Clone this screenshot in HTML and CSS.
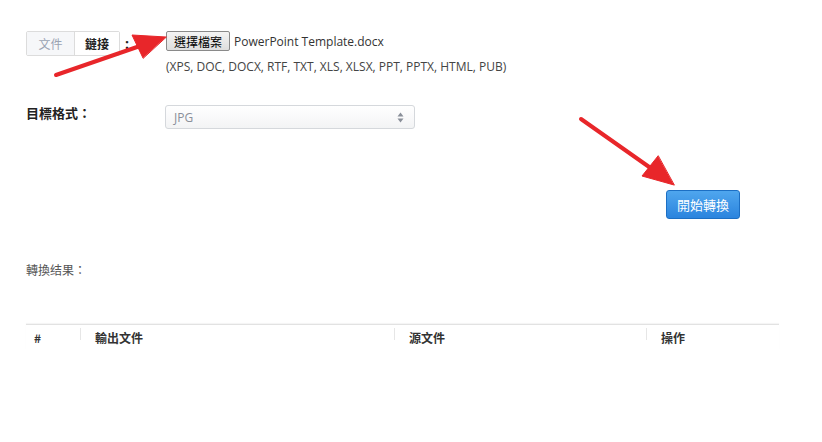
FILE: index.html
```html
<!DOCTYPE html>
<html lang="zh-Hant">
<head>
<meta charset="utf-8">
<title>文件轉換</title>
<link rel="stylesheet" href="styles.css">
</head>
<body>
<div class="page">
  <form class="convert-form">
    <div class="row source-row">
      <div class="source-label">
        <div class="tabs">
          <span class="tab tab-off">文件</span>
          <span class="tab tab-on">鏈接</span>
        </div>
        <span class="colon">:</span>
      </div>
      <div class="source-field">
        <div class="file-line">
          <button type="button" class="file-btn">選擇檔案</button>
          <span class="file-name">PowerPoint Template.docx</span>
        </div>
        <div class="formats">(XPS, DOC, DOCX, RTF, TXT, XLS, XLSX, PPT, PPTX, HTML, PUB)</div>
      </div>
    </div>

    <div class="row target-row">
      <label class="field-label">目標格式：</label>
      <div class="select">
        <span>JPG</span>
        <svg class="caret" width="7" height="11" viewBox="0 0 7 11"><path d="M3.5 0.5 L6.5 4.5 H0.5 Z M3.5 10.5 L6.5 6.5 H0.5 Z" fill="#8a8f99"/></svg>
      </div>
    </div>

    <div class="actions">
      <button type="button" class="start-btn">開始轉換</button>
    </div>
  </form>

  <div class="result-title">轉換结果：</div>

  <table class="result-table">
    <thead>
      <tr>
        <th class="c-num">#</th>
        <th class="c-out">輸出文件</th>
        <th class="c-src">源文件</th>
        <th class="c-op">操作</th>
      </tr>
    </thead>
  </table>

  <svg class="arrows" width="822" height="442" viewBox="0 0 822 442">
    <g fill="#e8262a" stroke="#e8262a" stroke-linecap="round">
      <line x1="56" y1="75" x2="140" y2="46" stroke-width="4"/>
      <polygon points="166,37 132,35 143,58" stroke-width="1"/>
      <line x1="581" y1="119" x2="652" y2="169" stroke-width="4"/>
      <polygon points="674,185 642,176 658,156" stroke-width="1"/>
    </g>
  </svg>
</div>
</body>
</html>
```

FILE: styles.css
```css
html, body {
  margin: 0;
  padding: 0;
  background: #fff;
}

.page {
  position: relative;
  width: 822px;
  height: 442px;
  padding: 31px 0 0 26px;
  box-sizing: border-box;
  font-family: "Open Sans", "Noto Sans CJK TC", sans-serif;
  font-size: 12px;
  color: #333;
}

.row {
  display: flex;
  align-items: flex-start;
}

.source-label {
  display: flex;
  align-items: center;
  width: 140px;
}

.tabs {
  display: flex;
  height: 25px;
  border: 1px solid #dcdcdc;
  border-radius: 2px;
  box-sizing: border-box;
}

.tab {
  display: flex;
  align-items: center;
  justify-content: center;
  font-family: "Noto Sans CJK TC", sans-serif;
  font-size: 12px;
}

.tab-off {
  width: 47px;
  background: #f6f7f9;
  color: #9aa3b3;
}

.tab-on {
  width: 44px;
  background: #fff;
  color: #222;
  font-weight: bold;
  border-left: 1px solid #dcdcdc;
}

.colon {
  margin-left: 5px;
  font-size: 14px;
  font-weight: bold;
  color: #222;
}

.file-line {
  display: flex;
  align-items: center;
  height: 20px;
}

.file-btn {
  height: 20px;
  width: 64px;
  padding: 0;
  border: 1px solid #8a8a8a;
  border-radius: 2px;
  background: linear-gradient(#f4f4f4, #dedede);
  font-family: "Noto Sans CJK TC", sans-serif;
  font-size: 12px;
  color: #000;
}

.file-name {
  margin-left: 4px;
  color: #333;
}

.formats {
  margin-top: 7px;
  color: #444;
}

.target-row {
  margin-top: 30px;
  align-items: center;
}

.field-label {
  width: 139px;
  font-family: "Noto Sans CJK TC", sans-serif;
  font-size: 13px;
  font-weight: bold;
  color: #222;
  margin-top: -9px;
}

.select {
  display: flex;
  align-items: center;
  justify-content: space-between;
  width: 250px;
  height: 24px;
  padding: 0 10px 0 8px;
  box-sizing: border-box;
  border: 1px solid #d5d8dc;
  border-radius: 3px;
  background: linear-gradient(#fff, #f3f4f5);
  color: #8a8f99;
}

.actions {
  display: flex;
  justify-content: flex-end;
  width: 714px;
  margin-top: 61px;
}

.start-btn {
  width: 74px;
  height: 29px;
  padding: 0;
  border: 1px solid #1c6fc4;
  border-radius: 3px;
  background: linear-gradient(#4fa6ee, #2b84de);
  color: #fff;
  font-family: "Noto Sans CJK TC", sans-serif;
  font-size: 13px;
}

.result-title {
  margin-top: 42px;
  font-family: "Noto Sans CJK TC", sans-serif;
  font-size: 12px;
  color: #555;
}

.result-table {
  margin-top: 46px;
  width: 753px;
  border-collapse: collapse;
  border-top: 1px solid #e2e2e2;
  box-shadow: 0 -1px 1px rgba(0, 0, 0, 0.04);
}

.result-table th {
  position: relative;
  text-align: left;
  font-family: "Noto Sans CJK TC", sans-serif;
  font-size: 12px;
  font-weight: bold;
  color: #333;
  padding: 4px 0 4px 15px;
}

.result-table th + th::before {
  content: "";
  position: absolute;
  left: 0;
  top: 3px;
  height: 12px;
  border-left: 1px solid #e6e6e6;
}

.result-table .c-num {
  width: 46px;
  padding-left: 8px;
}

.result-table .c-out { width: 299px; }
.result-table .c-src { width: 237px; }
.result-table .c-op { width: 118px; }

.arrows {
  position: absolute;
  left: 0;
  top: 0;
  pointer-events: none;
}
```
